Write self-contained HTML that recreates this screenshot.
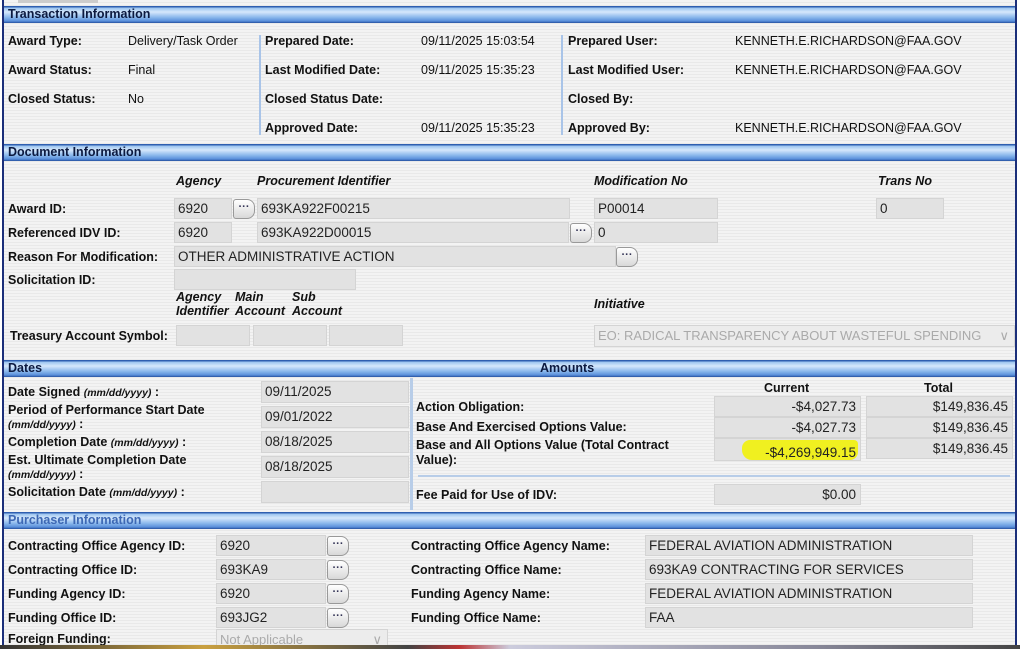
<!DOCTYPE html>
<html><head><style>
*{margin:0;padding:0;box-sizing:border-box}
body{width:1020px;height:649px;overflow:hidden;position:relative;background:#fff;font-family:"Liberation Sans",Arial,sans-serif;font-size:12.5px;color:#111}
#page{position:absolute;left:2px;top:0;width:1015px;height:649px;border-left:2px solid #1b2f7a;border-right:2px solid #1b2f7a;background:repeating-linear-gradient(#f3f3f3 0 2px,#e9e9e9 2px 3px)}
.hd{position:absolute;left:0;right:0;height:17px;background:linear-gradient(#2f5fb0 0,#2f5fb0 1px,#9cc4f0 2px,#d6e8fb 6px,#8fbbed 11px,#5a8fdb 15px,#24509f 17px);font-weight:bold;font-size:12.5px;line-height:17px;padding-left:4px;color:#0c1a40}
.a{position:absolute;white-space:nowrap}
.b{font-weight:bold}
.i{font-style:italic;font-weight:bold}
.in{position:absolute;background:#e2e2e2;border:1px solid #d4d4d4;font-size:13.5px;padding-left:3px;line-height:19px;white-space:nowrap;color:#222}
.r{text-align:right;padding-right:4px}
.btn{position:absolute;width:22px;height:20px;border:1px solid #999;border-radius:3px 8px 8px 3px;background:linear-gradient(#fff,#d8d8d8);font-size:11px;line-height:15px;text-align:center;font-weight:bold;color:#335}
.vl{position:absolute;width:2px;background:#a9c4e8}
.s{font-size:10.5px}
</style></head><body>
<div id="page">
<div style="position:absolute;left:14px;top:0;width:80px;height:3px;background:#ccc"></div>
<div class="hd" style="top:6px">Transaction Information</div>
<div class="a b" style="left:4px;top:34px">Award Type:</div><div class="a" style="left:124px;top:34px">Delivery/Task Order</div>
<div class="a b" style="left:4px;top:63px">Award Status:</div><div class="a" style="left:124px;top:63px">Final</div>
<div class="a b" style="left:4px;top:92px">Closed Status:</div><div class="a" style="left:124px;top:92px">No</div>
<div class="vl" style="left:255px;top:35px;height:100px"></div>
<div class="a b" style="left:261px;top:34px">Prepared Date:</div><div class="a" style="left:417px;top:34px">09/11/2025 15:03:54</div>
<div class="a b" style="left:261px;top:63px">Last Modified Date:</div><div class="a" style="left:417px;top:63px">09/11/2025 15:35:23</div>
<div class="a b" style="left:261px;top:92px">Closed Status Date:</div>
<div class="a b" style="left:261px;top:121px">Approved Date:</div><div class="a" style="left:417px;top:121px">09/11/2025 15:35:23</div>
<div class="vl" style="left:557px;top:35px;height:100px"></div>
<div class="a b" style="left:564px;top:34px">Prepared User:</div><div class="a" style="left:731px;top:34px">KENNETH.E.RICHARDSON@FAA.GOV</div>
<div class="a b" style="left:564px;top:63px">Last Modified User:</div><div class="a" style="left:731px;top:63px">KENNETH.E.RICHARDSON@FAA.GOV</div>
<div class="a b" style="left:564px;top:92px">Closed By:</div>
<div class="a b" style="left:564px;top:121px">Approved By:</div><div class="a" style="left:731px;top:121px">KENNETH.E.RICHARDSON@FAA.GOV</div>

<div class="hd" style="top:144px">Document Information</div>
<div class="a i" style="left:172px;top:174px">Agency</div>
<div class="a i" style="left:253px;top:174px">Procurement Identifier</div>
<div class="a i" style="left:590px;top:174px">Modification No</div>
<div class="a i" style="left:874px;top:174px">Trans No</div>
<div class="a b" style="left:4px;top:202px">Award ID:</div>
<div class="in" style="left:170px;top:198px;width:58px;height:21px">6920</div>
<div class="btn" style="left:229px;top:199px">···</div>
<div class="in" style="left:253px;top:198px;width:313px;height:21px">693KA922F00215</div>
<div class="in" style="left:590px;top:198px;width:124px;height:21px">P00014</div>
<div class="in" style="left:872px;top:198px;width:68px;height:21px">0</div>
<div class="a b" style="left:4px;top:226px">Referenced IDV ID:</div>
<div class="in" style="left:170px;top:222px;width:58px;height:21px">6920</div>
<div class="in" style="left:253px;top:222px;width:312px;height:21px">693KA922D00015</div>
<div class="btn" style="left:566px;top:223px">···</div>
<div class="in" style="left:590px;top:222px;width:124px;height:21px">0</div>
<div class="a b" style="left:4px;top:250px">Reason For Modification:</div>
<div class="in" style="left:170px;top:246px;width:442px;height:21px">OTHER ADMINISTRATIVE ACTION</div>
<div class="btn" style="left:612px;top:247px">···</div>
<div class="a b" style="left:4px;top:273px">Solicitation ID:</div>
<div class="in" style="left:170px;top:269px;width:182px;height:21px"></div>
<div class="a i" style="left:172px;top:290px;line-height:14px">Agency<br>Identifier</div>
<div class="a i" style="left:231px;top:290px;line-height:14px">Main<br>Account</div>
<div class="a i" style="left:288px;top:290px;line-height:14px">Sub<br>Account</div>
<div class="a i" style="left:590px;top:297px">Initiative</div>
<div class="a b" style="left:6px;top:329px">Treasury Account Symbol:</div>
<div class="in" style="left:172px;top:325px;width:74px;height:21px"></div>
<div class="in" style="left:249px;top:325px;width:74px;height:21px"></div>
<div class="in" style="left:325px;top:325px;width:74px;height:21px"></div>
<div class="in" style="left:590px;top:325px;width:421px;height:22px;color:#aaa;background:#ececec;font-size:13px">EO: RADICAL TRANSPARENCY ABOUT WASTEFUL SPENDING <span style="position:absolute;right:5px">&#8744;</span></div>

<div class="hd" style="top:360px">Dates<span style="position:absolute;left:536px">Amounts</span></div>
<div class="vl" style="left:406px;top:378px;height:132px;background:#b8cde8;width:3px"></div>
<div class="a b" style="left:4px;top:385px">Date Signed <span class="s i">(mm/dd/yyyy)</span> :</div>
<div class="in" style="left:257px;top:381px;width:148px;height:22px">09/11/2025</div>
<div class="a b" style="left:4px;top:403px;line-height:14px">Period of Performance Start Date<br><span class="s i">(mm/dd/yyyy)</span> :</div>
<div class="in" style="left:257px;top:406px;width:148px;height:22px">09/01/2022</div>
<div class="a b" style="left:4px;top:435px">Completion Date <span class="s i">(mm/dd/yyyy)</span> :</div>
<div class="in" style="left:257px;top:431px;width:148px;height:22px">08/18/2025</div>
<div class="a b" style="left:4px;top:453px;line-height:14px">Est. Ultimate Completion Date<br><span class="s i">(mm/dd/yyyy)</span> :</div>
<div class="in" style="left:257px;top:456px;width:148px;height:22px">08/18/2025</div>
<div class="a b" style="left:4px;top:485px">Solicitation Date <span class="s i">(mm/dd/yyyy)</span> :</div>
<div class="in" style="left:257px;top:481px;width:148px;height:22px"></div>

<div class="a b" style="left:760px;top:381px">Current</div>
<div class="a b" style="left:920px;top:381px">Total</div>
<div class="a b" style="left:412px;top:400px">Action Obligation:</div>
<div class="a b" style="left:412px;top:420px">Base And Exercised Options Value:</div>
<div class="a b" style="left:412px;top:438px;line-height:15px">Base and All Options Value (Total Contract<br>Value):</div>
<div class="in r" style="left:710px;top:396px;width:147px;height:21px">-$4,027.73</div>
<div class="in r" style="left:862px;top:396px;width:147px;height:21px">$149,836.45</div>
<div class="in r" style="left:710px;top:417px;width:147px;height:21px">-$4,027.73</div>
<div class="in r" style="left:862px;top:417px;width:147px;height:21px">$149,836.45</div>
<div class="in r" style="left:710px;top:438px;width:147px;height:23px;line-height:27px"><span style="position:absolute;right:2px;top:1px;width:116px;height:20px;background:#f0f020;border-radius:8px 4px 8px 10px"></span><span style="position:relative">-$4,269,949.15</span></div>
<div class="in r" style="left:862px;top:438px;width:147px;height:21px">$149,836.45</div>
<div style="position:absolute;left:414px;top:475px;width:592px;height:2px;background:#b8cde8"></div>
<div class="a b" style="left:412px;top:488px">Fee Paid for Use of IDV:</div>
<div class="in r" style="left:710px;top:484px;width:147px;height:21px">$0.00</div>

<div class="hd" style="top:512px;color:#3d68b4">Purchaser Information</div>
<div class="a b" style="left:4px;top:539px">Contracting Office Agency ID:</div>
<div class="in" style="left:212px;top:535px;width:110px;height:21px">6920</div><div class="btn" style="left:323px;top:536px">···</div>
<div class="a b" style="left:4px;top:563px">Contracting Office ID:</div>
<div class="in" style="left:212px;top:559px;width:110px;height:21px">693KA9</div><div class="btn" style="left:323px;top:560px">···</div>
<div class="a b" style="left:4px;top:587px">Funding Agency ID:</div>
<div class="in" style="left:212px;top:583px;width:110px;height:21px">6920</div><div class="btn" style="left:323px;top:584px">···</div>
<div class="a b" style="left:4px;top:611px">Funding Office ID:</div>
<div class="in" style="left:212px;top:607px;width:110px;height:21px">693JG2</div><div class="btn" style="left:323px;top:608px">···</div>
<div class="a b" style="left:4px;top:632px">Foreign Funding:</div>
<div class="in" style="left:212px;top:629px;width:172px;height:20px;color:#aaa;background:#ececec;font-size:13px">Not Applicable<span style="position:absolute;right:5px">&#8744;</span></div>
<div class="a b" style="left:407px;top:539px">Contracting Office Agency Name:</div>
<div class="in" style="left:641px;top:535px;width:328px;height:21px">FEDERAL AVIATION ADMINISTRATION</div>
<div class="a b" style="left:407px;top:563px">Contracting Office Name:</div>
<div class="in" style="left:641px;top:559px;width:328px;height:21px">693KA9 CONTRACTING FOR SERVICES</div>
<div class="a b" style="left:407px;top:587px">Funding Agency Name:</div>
<div class="in" style="left:641px;top:583px;width:328px;height:21px">FEDERAL AVIATION ADMINISTRATION</div>
<div class="a b" style="left:407px;top:611px">Funding Office Name:</div>
<div class="in" style="left:641px;top:607px;width:328px;height:21px">FAA</div>
</div>
<div style="position:absolute;left:0;top:645px;width:1020px;height:4px;background:linear-gradient(90deg,#333 0,#c9a040 20%,#444 40%,#b33 45%,#ccd 50%,#889 80%,#444)"></div>
</body></html>
